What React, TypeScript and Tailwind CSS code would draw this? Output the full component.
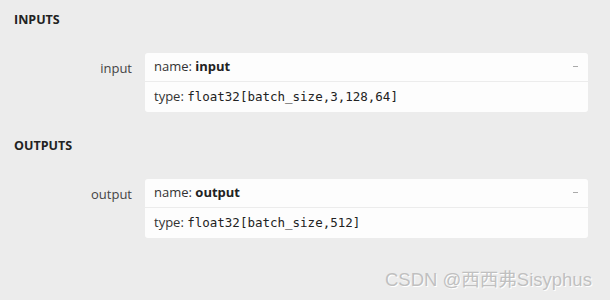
const sections = [
  {
    title: "INPUTS",
    items: [{ label: "input", name: "input", type: "float32[batch_size,3,128,64]" }],
  },
  {
    title: "OUTPUTS",
    items: [{ label: "output", name: "output", type: "float32[batch_size,512]" }],
  },
];

export default function App() {
  return (
    <div className="relative h-[300px] w-[610px] overflow-hidden bg-[#ececec] font-['Open_Sans',sans-serif] text-[13px] text-[#333]">
      {sections.map((section) => (
        <div key={section.title} className="pb-[14px] pl-[14px] pt-[12px]">
          <div className="h-[16px] text-[12.5px] font-bold leading-[16px] text-[#222]">{section.title}</div>
          {section.items.map((item) => (
            <div key={item.label} className="mt-[25px] flex items-start">
              <div className="w-[131px] pr-[13px] pt-[6px] text-right leading-[18px] text-[#444]">
                {item.label}
              </div>
              <div className="w-[443px] rounded-[3px] bg-[#fdfdfd]">
                <div className="flex h-[29px] items-center justify-between border-b border-[#ececec] pl-[9px] pr-[10px]">
                  <span>
                    name: <span className="font-bold text-[#222]">{item.name}</span>
                  </span>
                  <span className="mb-[2px] h-px w-[5px] bg-[#aaa]" />
                </div>
                <div className="flex h-[30px] items-center pl-[9px]">
                  type:&nbsp;
                  <span className="font-['DejaVu_Sans_Mono',monospace] text-[12.5px] text-[#222]">
                    {item.type}
                  </span>
                </div>
              </div>
            </div>
          ))}
        </div>
      ))}
      <div className="absolute left-[385px] top-[266px] font-['Liberation_Sans','Noto_Sans_CJK_SC',sans-serif] text-[18.5px] text-[#c0c0c0] [text-shadow:1px_1px_0_#fff]">
        CSDN @西西弗Sisyphus
      </div>
    </div>
  );
}
